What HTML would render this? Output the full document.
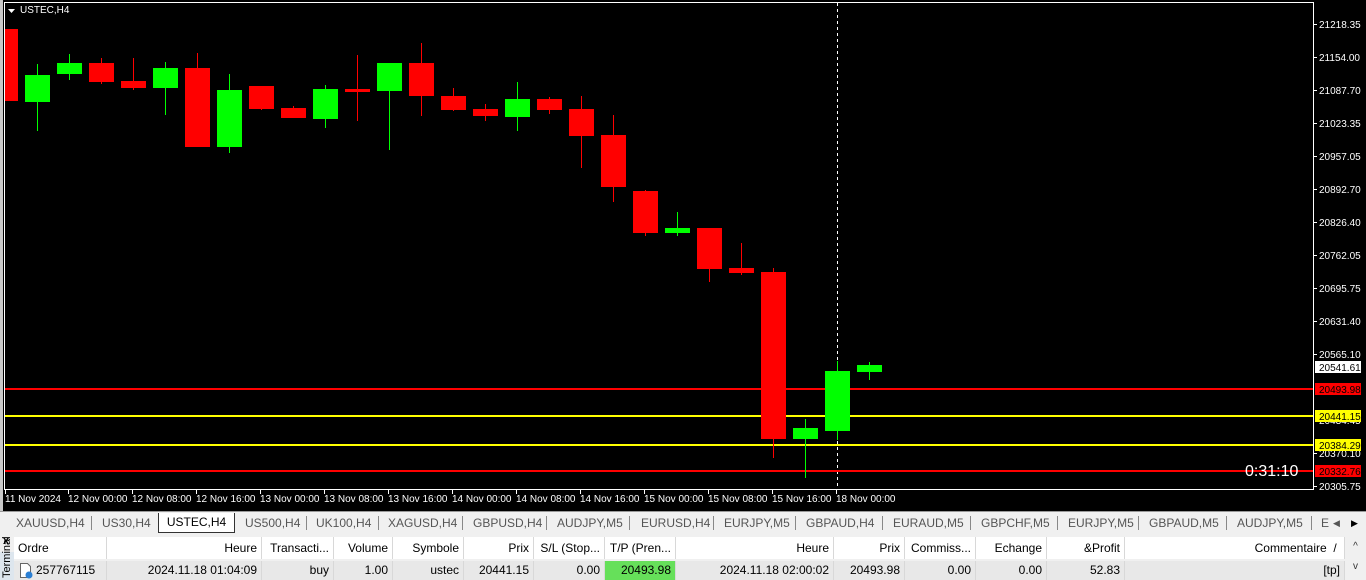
<!DOCTYPE html>
<html><head><meta charset="utf-8"><style>
body{margin:0;width:1366px;height:580px;overflow:hidden;background:#f0f0f0;font-family:"Liberation Sans",Tahoma,sans-serif;position:relative}
#chart{position:absolute;left:0;top:0}
.tabs{position:absolute;left:0;top:511px;width:1366px;height:22px;background:#f0f0f0;border-top:1px solid #999;font-size:12px;color:#555}
.tab{position:absolute;top:4px}
.sep{position:absolute;top:4px;width:1px;height:14px;background:#888}
.act{position:absolute;left:158px;top:1px;width:75px;height:19px;background:#fff;border:1px solid #333;border-top:none;color:#000;text-align:center;line-height:18px}
.tbl{position:absolute;left:14px;top:537px;font-size:12px;color:#000}
.c{position:absolute;height:22px;line-height:22px;box-sizing:border-box;border-right:1px solid #d8d8d8;padding:0 4px;white-space:nowrap;overflow:hidden}
.h{background:#fff;top:0}
.r{background:#e8e8e8;top:24px;height:19px;line-height:19px}
</style></head><body>
<svg id="chart" width="1366" height="511" xmlns="http://www.w3.org/2000/svg" font-family="Liberation Sans, sans-serif">
<rect x="0" y="0" width="1366" height="511" fill="#000"/>
<rect x="0" y="0" width="3" height="511" fill="#c8c8c8"/>
<rect x="3" y="0" width="1363" height="2" fill="#000"/>
<line x1="4" y1="2.5" x2="1313.5" y2="2.5" stroke="#fff"/>
<line x1="4.5" y1="2" x2="4.5" y2="489" stroke="#fff"/>
<line x1="1313.5" y1="2" x2="1313.5" y2="490" stroke="#fff"/>
<line x1="4" y1="489.5" x2="1314" y2="489.5" stroke="#fff"/>
<line x1="837.5" y1="3" x2="837.5" y2="489" stroke="#fff" stroke-dasharray="3,3"/>
<polygon points="8,9 15,9 11.5,13" fill="#fff"/>
<text x="20" y="13" fill="#fff" font-size="10">USTEC,H4</text>
<line x1="5" y1="389" x2="1313" y2="389" stroke="#f00" stroke-width="2"/>
<line x1="5" y1="416" x2="1313" y2="416" stroke="#ff0" stroke-width="2"/>
<line x1="5" y1="445" x2="1313" y2="445" stroke="#ff0" stroke-width="2"/>
<line x1="5" y1="471" x2="1313" y2="471" stroke="#f00" stroke-width="2"/>
<g id="c">
<!-- x, bodyTop, bodyBot, wickTop, wickBot, color -->
</g>
<g>
<rect x="5" y="29" width="13" height="72" fill="#f00"/>
<line x1="37.5" y1="64" x2="37.5" y2="131" stroke="#0f0"/><rect x="25" y="75" width="25" height="27" fill="#0f0"/>
<line x1="69.5" y1="54" x2="69.5" y2="80" stroke="#0f0"/><rect x="57" y="63" width="25" height="11" fill="#0f0"/>
<line x1="101.5" y1="58" x2="101.5" y2="84" stroke="#f00"/><rect x="89" y="63" width="25" height="19" fill="#f00"/>
<line x1="133.5" y1="58" x2="133.5" y2="90" stroke="#f00"/><rect x="121" y="81" width="25" height="7" fill="#f00"/>
<line x1="165.5" y1="62" x2="165.5" y2="115" stroke="#0f0"/><rect x="153" y="68" width="25" height="20" fill="#0f0"/>
<line x1="197.5" y1="53" x2="197.5" y2="147" stroke="#f00"/><rect x="185" y="68" width="25" height="79" fill="#f00"/>
<line x1="229.5" y1="74" x2="229.5" y2="153" stroke="#0f0"/><rect x="217" y="90" width="25" height="57" fill="#0f0"/>
<line x1="261.5" y1="86" x2="261.5" y2="110" stroke="#f00"/><rect x="249" y="86" width="25" height="23" fill="#f00"/>
<line x1="293.5" y1="106" x2="293.5" y2="118" stroke="#f00"/><rect x="281" y="108" width="25" height="10" fill="#f00"/>
<line x1="325.5" y1="85" x2="325.5" y2="128" stroke="#0f0"/><rect x="313" y="89" width="25" height="30" fill="#0f0"/>
<line x1="357.5" y1="55" x2="357.5" y2="121" stroke="#f00"/><rect x="345" y="89" width="25" height="3" fill="#f00"/>
<line x1="389.5" y1="63" x2="389.5" y2="150" stroke="#0f0"/><rect x="377" y="63" width="25" height="28" fill="#0f0"/>
<line x1="421.5" y1="43" x2="421.5" y2="116" stroke="#f00"/><rect x="409" y="63" width="25" height="33" fill="#f00"/>
<line x1="453.5" y1="88" x2="453.5" y2="111" stroke="#f00"/><rect x="441" y="96" width="25" height="14" fill="#f00"/>
<line x1="485.5" y1="104" x2="485.5" y2="121" stroke="#f00"/><rect x="473" y="109" width="25" height="7" fill="#f00"/>
<line x1="517.5" y1="82" x2="517.5" y2="131" stroke="#0f0"/><rect x="505" y="99" width="25" height="18" fill="#0f0"/>
<line x1="549.5" y1="97" x2="549.5" y2="114" stroke="#f00"/><rect x="537" y="99" width="25" height="11" fill="#f00"/>
<line x1="581.5" y1="96" x2="581.5" y2="168" stroke="#f00"/><rect x="569" y="109" width="25" height="27" fill="#f00"/>
<line x1="613.5" y1="115" x2="613.5" y2="202" stroke="#f00"/><rect x="601" y="135" width="25" height="52" fill="#f00"/>
<line x1="645.5" y1="190" x2="645.5" y2="236" stroke="#f00"/><rect x="633" y="191" width="25" height="42" fill="#f00"/>
<line x1="677.5" y1="212" x2="677.5" y2="236" stroke="#0f0"/><rect x="665" y="228" width="25" height="5" fill="#0f0"/>
<line x1="709.5" y1="228" x2="709.5" y2="282" stroke="#f00"/><rect x="697" y="228" width="25" height="41" fill="#f00"/>
<line x1="741.5" y1="243" x2="741.5" y2="275" stroke="#f00"/><rect x="729" y="268" width="25" height="5" fill="#f00"/>
<line x1="773.5" y1="268" x2="773.5" y2="458" stroke="#f00"/><rect x="761" y="272" width="25" height="167" fill="#f00"/>
<line x1="805.5" y1="419" x2="805.5" y2="478" stroke="#0f0"/><rect x="793" y="428" width="25" height="11" fill="#0f0"/>
<line x1="837.5" y1="361" x2="837.5" y2="440" stroke="#0f0"/><rect x="825" y="371" width="25" height="60" fill="#0f0"/>
<line x1="869.5" y1="362" x2="869.5" y2="380" stroke="#0f0"/><rect x="857" y="365" width="25" height="7" fill="#0f0"/>
</g>
<g fill="#fff" font-size="10">
<g stroke="#fff"><line x1="1314" y1="24.5" x2="1317" y2="24.5"/><line x1="1314" y1="57.5" x2="1317" y2="57.5"/><line x1="1314" y1="90.5" x2="1317" y2="90.5"/><line x1="1314" y1="123.5" x2="1317" y2="123.5"/><line x1="1314" y1="156.5" x2="1317" y2="156.5"/><line x1="1314" y1="189.5" x2="1317" y2="189.5"/><line x1="1314" y1="222.5" x2="1317" y2="222.5"/><line x1="1314" y1="255.5" x2="1317" y2="255.5"/><line x1="1314" y1="288.5" x2="1317" y2="288.5"/><line x1="1314" y1="321.5" x2="1317" y2="321.5"/><line x1="1314" y1="354.5" x2="1317" y2="354.5"/><line x1="1314" y1="453.5" x2="1317" y2="453.5"/><line x1="1314" y1="486.5" x2="1317" y2="486.5"/></g>
<text x="1319" y="28">21218.35</text><text x="1319" y="61">21154.00</text><text x="1319" y="94">21087.70</text><text x="1319" y="127">21023.35</text><text x="1319" y="160">20957.05</text><text x="1319" y="193">20892.70</text><text x="1319" y="226">20826.40</text><text x="1319" y="259">20762.05</text><text x="1319" y="292">20695.75</text><text x="1319" y="325">20631.40</text><text x="1319" y="358">20565.10</text><text x="1319" y="424">20434.45</text><text x="1319" y="457">20370.10</text><text x="1319" y="490">20305.75</text>
<rect x="1315" y="361" width="46" height="12" fill="#fff"/><text x="1319" y="371" fill="#000">20541.61</text>
<rect x="1315" y="383" width="46" height="12" fill="#f00"/><text x="1319" y="393" fill="#000">20493.98</text>
<rect x="1315" y="410" width="46" height="12" fill="#ff0"/><text x="1319" y="420" fill="#000">20441.15</text>
<rect x="1315" y="439" width="46" height="12" fill="#ff0"/><text x="1319" y="449" fill="#000">20384.29</text>
<rect x="1315" y="465" width="46" height="12" fill="#f00"/><text x="1319" y="475" fill="#000">20332.76</text>
<text x="1245" y="476" font-size="16">0:31:10</text>
<g stroke="#fff"><line x1="5.5" y1="490" x2="5.5" y2="494"/><line x1="68.5" y1="490" x2="68.5" y2="494"/><line x1="132.5" y1="490" x2="132.5" y2="494"/><line x1="196.5" y1="490" x2="196.5" y2="494"/><line x1="260.5" y1="490" x2="260.5" y2="494"/><line x1="324.5" y1="490" x2="324.5" y2="494"/><line x1="388.5" y1="490" x2="388.5" y2="494"/><line x1="452.5" y1="490" x2="452.5" y2="494"/><line x1="516.5" y1="490" x2="516.5" y2="494"/><line x1="580.5" y1="490" x2="580.5" y2="494"/><line x1="644.5" y1="490" x2="644.5" y2="494"/><line x1="708.5" y1="490" x2="708.5" y2="494"/><line x1="772.5" y1="490" x2="772.5" y2="494"/><line x1="836.5" y1="490" x2="836.5" y2="494"/></g>
<text x="5" y="502">11 Nov 2024</text><text x="68" y="502">12 Nov 00:00</text><text x="132" y="502">12 Nov 08:00</text><text x="196" y="502">12 Nov 16:00</text><text x="260" y="502">13 Nov 00:00</text><text x="324" y="502">13 Nov 08:00</text><text x="388" y="502">13 Nov 16:00</text><text x="452" y="502">14 Nov 00:00</text><text x="516" y="502">14 Nov 08:00</text><text x="580" y="502">14 Nov 16:00</text><text x="644" y="502">15 Nov 00:00</text><text x="708" y="502">15 Nov 08:00</text><text x="772" y="502">15 Nov 16:00</text><text x="836" y="502">18 Nov 00:00</text>
</g>
</svg>
<div class="tabs">
<span class="tab" style="left:16px">XAUUSD,H4</span><span class="sep" style="left:91px"></span>
<span class="tab" style="left:102px">US30,H4</span>
<div class="act">USTEC,H4</div>
<span class="tab" style="left:245px">US500,H4</span><span class="sep" style="left:306px"></span>
<span class="tab" style="left:316px">UK100,H4</span><span class="sep" style="left:378px"></span>
<span class="tab" style="left:388px">XAGUSD,H4</span><span class="sep" style="left:462px"></span>
<span class="tab" style="left:473px">GBPUSD,H4</span><span class="sep" style="left:546px"></span>
<span class="tab" style="left:557px">AUDJPY,M5</span><span class="sep" style="left:629px"></span>
<span class="tab" style="left:641px">EURUSD,H4</span><span class="sep" style="left:713px"></span>
<span class="tab" style="left:724px">EURJPY,M5</span><span class="sep" style="left:795px"></span>
<span class="tab" style="left:806px">GBPAUD,H4</span><span class="sep" style="left:882px"></span>
<span class="tab" style="left:893px">EURAUD,M5</span><span class="sep" style="left:970px"></span>
<span class="tab" style="left:981px">GBPCHF,M5</span><span class="sep" style="left:1057px"></span>
<span class="tab" style="left:1068px">EURJPY,M5</span><span class="sep" style="left:1138px"></span>
<span class="tab" style="left:1149px">GBPAUD,M5</span><span class="sep" style="left:1226px"></span>
<span class="tab" style="left:1237px">AUDJPY,M5</span><span class="sep" style="left:1311px"></span>
<span class="tab" style="left:1321px">E</span>
<span class="tab" style="left:1333px;font-size:9px;top:6px">◀</span><span class="tab" style="left:1351px;font-size:9px;top:6px;color:#000">▶</span>
</div>
<div style="position:absolute;left:0;top:534px;width:1366px;height:46px;background:#f0f0f0"></div>
<div style="position:absolute;left:3px;top:535px;font-size:11px;font-weight:bold">x</div>
<div style="position:absolute;left:0;top:552px;width:14px;height:28px;background:#dde6ee"></div>
<div style="position:absolute;left:1px;top:578px;font-size:11px;transform:rotate(-90deg);transform-origin:0 0">Terminal</div>
<div class="tbl">
<div class="c h" style="left:0;width:93px">Ordre</div>
<div class="c h" style="left:93px;width:155px;text-align:right">Heure</div>
<div class="c h" style="left:248px;width:72px;text-align:right">Transacti...</div>
<div class="c h" style="left:320px;width:59px;text-align:right">Volume</div>
<div class="c h" style="left:379px;width:71px;text-align:right">Symbole</div>
<div class="c h" style="left:450px;width:70px;text-align:right">Prix</div>
<div class="c h" style="left:520px;width:71px;text-align:right">S/L (Stop...</div>
<div class="c h" style="left:591px;width:71px;text-align:right">T/P (Pren...</div>
<div class="c h" style="left:662px;width:158px;text-align:right">Heure</div>
<div class="c h" style="left:820px;width:71px;text-align:right">Prix</div>
<div class="c h" style="left:891px;width:71px;text-align:right">Commiss...</div>
<div class="c h" style="left:962px;width:71px;text-align:right">Echange</div>
<div class="c h" style="left:1033px;width:78px;text-align:right">&amp;Profit</div>
<div class="c h" style="left:1111px;width:220px;text-align:right">Commentaire &nbsp;/&nbsp;</div>
<div class="c r" style="left:0;width:93px;padding-left:22px">257767115</div>
<div class="c r" style="left:93px;width:155px;text-align:right">2024.11.18 01:04:09</div>
<div class="c r" style="left:248px;width:72px;text-align:right">buy</div>
<div class="c r" style="left:320px;width:59px;text-align:right">1.00</div>
<div class="c r" style="left:379px;width:71px;text-align:right">ustec</div>
<div class="c r" style="left:450px;width:70px;text-align:right">20441.15</div>
<div class="c r" style="left:520px;width:71px;text-align:right">0.00</div>
<div class="c r" style="left:591px;width:71px;text-align:right;background:#66e05a">20493.98</div>
<div class="c r" style="left:662px;width:158px;text-align:right">2024.11.18 02:00:02</div>
<div class="c r" style="left:820px;width:71px;text-align:right">20493.98</div>
<div class="c r" style="left:891px;width:71px;text-align:right">0.00</div>
<div class="c r" style="left:962px;width:71px;text-align:right">0.00</div>
<div class="c r" style="left:1033px;width:78px;text-align:right">52.83</div>
<div class="c r" style="left:1111px;width:220px;text-align:right">[tp]</div>
</div>
<svg style="position:absolute;left:19px;top:563px" width="14" height="16"><path d="M1.5 0.5h7l3 3v11h-10z" fill="#fff" stroke="#666"/><circle cx="10" cy="12" r="3.5" fill="#2a7fd4"/></svg>
<div style="position:absolute;left:1345px;top:537px;width:21px;height:43px;background:#f0f0f0;font-size:10px;color:#333;text-align:center;line-height:20px">^<br>v</div>
</body></html>
